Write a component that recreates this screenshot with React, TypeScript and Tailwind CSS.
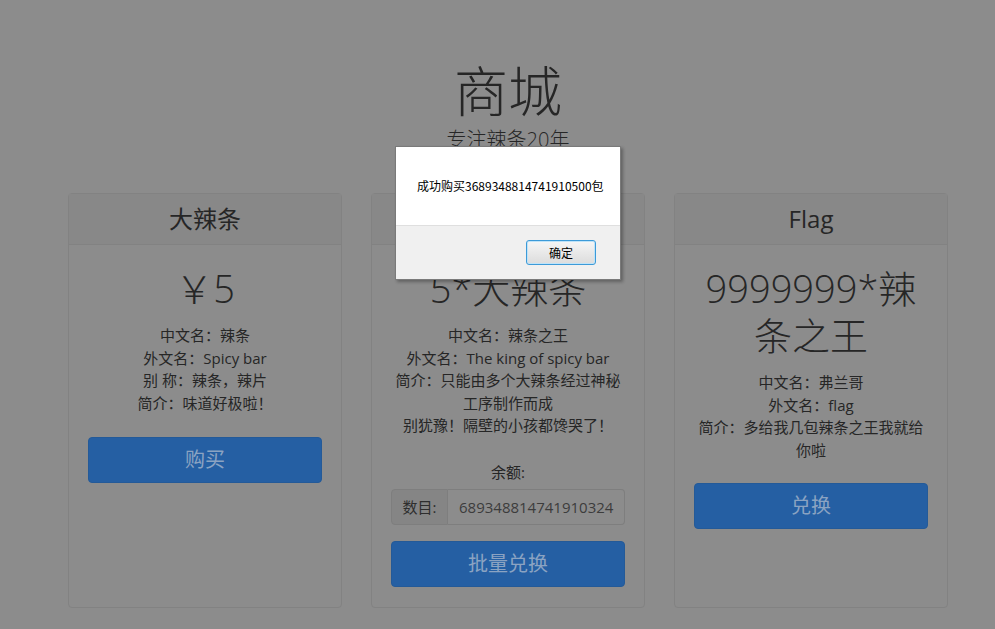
import React from "react"

const font = "font-['Open_Sans','Noto_Sans_CJK_SC',sans-serif]"

function Card({ title, price, lines, children }: { title: string, price: React.ReactNode, lines: string[], children: React.ReactNode }) {
    return <div className="w-[274px] border border-[#828282] rounded-[4px] flex flex-col bg-[#8c8c8c]">
        <div className="h-[51px] flex items-center justify-center bg-[#888888] border-b border-[#828282] text-[24px] text-[#262626]">
            {title}
        </div>
        <div className="px-[19px] pt-[20px] pb-[20px] flex flex-col text-center">
            <h1 className="text-[38px] leading-[47px] font-light text-[#262626] mb-[12px]">{price}</h1>
            <ul className="text-[15px] leading-[22.5px] text-[#262626]">
                {lines.map(l => <li key={l}>{l}</li>)}
            </ul>
            {children}
        </div>
    </div>
}

function BlueButton({ label }: { label: string }) {
    return <button className="w-full h-[46px] rounded-[4px] bg-[#255fa3] text-[#8ba3c2] text-[20px] border border-[#245a98]">
        {label}
    </button>
}

export default function App() {
    return <div className={`relative h-[629px] w-[995px] overflow-hidden bg-[#8c8c8c] ${font}`}>
        <div className="w-[880px] ml-[68px] pt-[58px]">
            <div className="text-center text-[#262626]">
                <h1 className="text-[54px] leading-[66px] font-light">商城</h1>
                <p className="text-[20px] leading-[28px] font-light mt-[2px]">专注辣条20年</p>
            </div>
            <div className="flex gap-[29px] mt-[39px]">
                <Card title="大辣条" price="￥5" lines={['中文名：辣条', '外文名：Spicy bar', '别 称：辣条，辣片', '简介：味道好极啦！']}>
                    <div className="mt-[23px]"><BlueButton label="购买" /></div>
                </Card>
                <Card title="5*大辣条" price="5*大辣条" lines={['中文名：辣条之王', '外文名：The king of spicy bar', '简介：只能由多个大辣条经过神秘工序制作而成', '别犹豫！隔壁的小孩都馋哭了！']}>
                    <p className="mt-[24px] text-[15px] leading-[22.5px] text-[#262626]">余额:</p>
                    <div className="mt-[6px] flex h-[36px] text-[15px]">
                        <span className="w-[57px] flex items-center justify-center bg-[#858585] border border-[#7e7e7e] rounded-l-[4px] text-[#2e2e2e]">数目:</span>
                        <span className="flex-1 flex items-center pl-[11px] border border-l-0 border-[#7e7e7e] rounded-r-[4px] text-[#3c3c3c] overflow-hidden whitespace-nowrap">689348814741910324</span>
                    </div>
                    <div className="mt-[16px]"><BlueButton label="批量兑换" /></div>
                </Card>
                <Card title="Flag" price={<>9999999*辣<br />条之王</>} lines={['中文名：弗兰哥', '外文名：flag', '简介：多给我几包辣条之王我就给你啦']}>
                    <div className="mt-[22px]"><BlueButton label="兑换" /></div>
                </Card>
            </div>
        </div>

        <div className="absolute left-[395px] top-[146px] w-[226px] h-[134px] border border-[#7a7a7a] bg-white shadow-[2px_2px_3px_rgba(0,0,0,0.3)] flex flex-col font-['Noto_Sans_CJK_SC',sans-serif]">
            <div className="h-[78px] flex items-center pl-[21px] text-[12px] text-black">
                成功购买3689348814741910500包
            </div>
            <div className="flex-1 bg-[#f0f0f0] border-t border-[#dfdfdf] flex items-center justify-end pr-[24px]">
                <button className="w-[70px] h-[25px] rounded-[3px] border border-[#3c9ad8] bg-gradient-to-b from-[#f6f6f6] to-[#dcdcdc] text-[12px] text-black shadow-[inset_0_0_0_1px_#bfe3f8]">
                    确定
                </button>
            </div>
        </div>
    </div>
}
